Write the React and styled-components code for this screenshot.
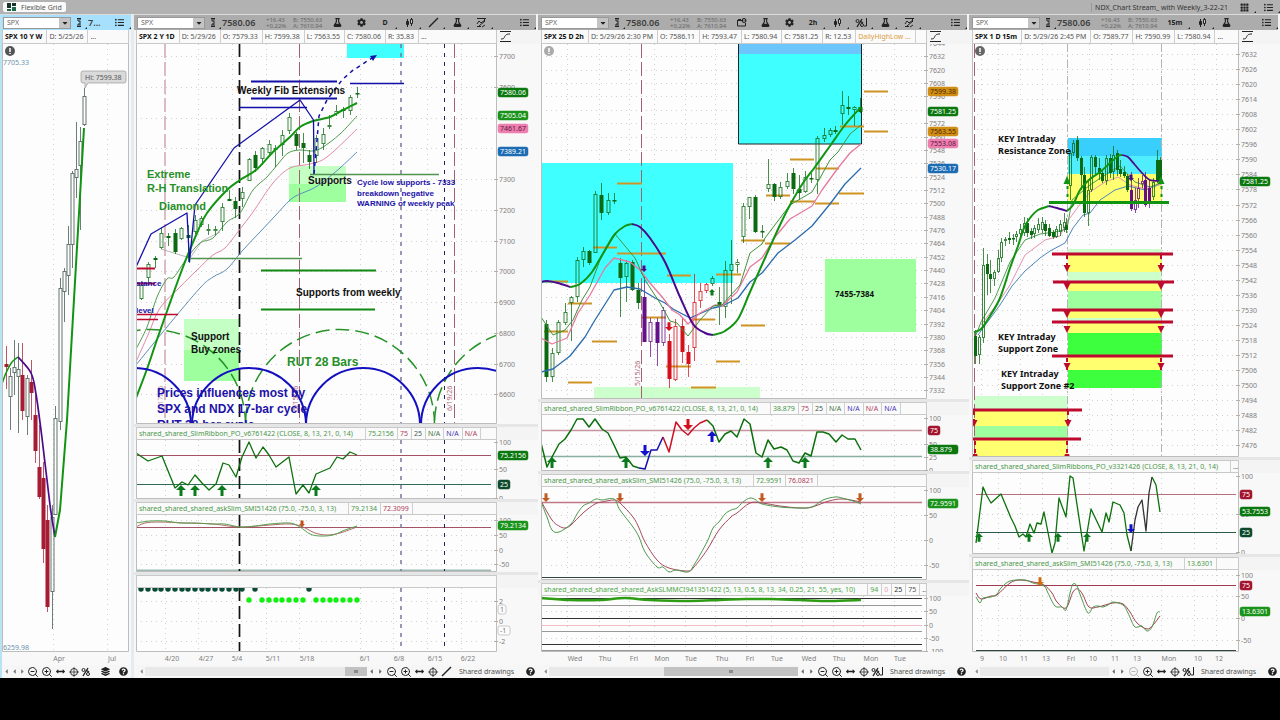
import React from "react";
import styled, { createGlobalStyle, css } from "styled-components";
import {
  FaFlask,
  FaCog,
  FaListUl,
  FaQuestionCircle,
  FaLayerGroup,
  FaCaretDown,
  FaCaretLeft,
  FaCaretRight,
  FaArrowsAltH,
} from "react-icons/fa";
import { BsGrid3X3GapFill } from "react-icons/bs";
import { ZoomIn, ZoomOut } from "lucide-react";

const INK = {
  g: "#0b6a12",
  k: "#3d524a",
  m: "#a51d35",
  p: "#65108a",
  r: "#d5101c",
};

const GREEN = "#119411";
const PURPLE = "#4b0a8c";
const NAVY = "#1210a8";
const CRIMSON = "#bd0a2e";

/* ---------- chart data: [x, high, low, top, bottom, ink, filled] ---------- */

const weeklyCandles = [
  [6, 346, 389, 364, 367, "m", 1], [10, 368, 430, 376, 397, "k"], [14, 340, 395, 367, 373, "k"],
  [18, 343, 433, 369, 377, "k"], [22, 343, 420, 375, 411, "m", 1], [27, 375, 435, 378, 417, "k"],
  [31, 360, 420, 382, 393, "m", 1], [35, 395, 463, 415, 451, "m", 1], [39, 425, 499, 467, 497, "m", 1],
  [43, 462, 563, 478, 549, "m", 1], [47, 505, 612, 520, 607, "m", 1], [52, 505, 629, 517, 592, "k"],
  [55, 406, 515, 418, 515, "k"], [60, 278, 430, 288, 422, "k"], [64, 268, 322, 271, 292, "k"],
  [68, 226, 295, 244, 276, "k"], [72, 171, 268, 173, 245, "k"], [76, 122, 198, 169, 178, "k"],
  [80, 127, 230, 141, 166, "k"], [84, 88, 126, 96, 125, "k"],
];

const dailyCandles = [
  [141, 283, 300, 285, 299, "g"], [148, 262, 285, 264, 278, "g"], [155, 256, 268, 258, 260, "g", 1],
  [161, 228, 249, 233, 248, "g"], [168, 233, 246, 236, 238, "g", 1], [175, 229, 254, 233, 252, "g", 1],
  [181, 227, 240, 228, 239, "g"], [188, 225, 262, 235, 238, "g", 1], [195, 215, 234, 220, 232, "g"],
  [201, 216, 227, 218, 225, "g"], [208, 224, 235, 229, 231, "g"], [215, 226, 235, 229, 231, "g"],
  [222, 203, 231, 207, 222, "g"], [229, 190, 201, 199, 201, "g", 1], [235, 197, 218, 201, 209, "g", 1],
  [242, 187, 207, 192, 199, "g"], [249, 158, 181, 159, 181, "g"], [255, 151, 172, 155, 168, "g", 1],
  [262, 147, 165, 148, 159, "g"], [269, 140, 155, 144, 153, "g"], [275, 145, 167, 148, 150, "g"],
  [282, 130, 156, 135, 145, "g"], [289, 113, 134, 117, 131, "g"], [296, 132, 150, 134, 146, "g", 1],
  [303, 133, 163, 143, 148, "g", 1], [309, 150, 169, 155, 162, "g", 1], [316, 135, 163, 138, 156, "g"],
  [323, 128, 150, 134, 144, "g"], [329, 115, 129, 125, 127, "g"], [336, 105, 116, 111, 114, "g"],
  [343, 107, 118, 109, 111, "g", 1], [350, 95, 115, 97, 111, "g"], [357, 87, 98, 93, 94, "g", 1],
];

const hourlyCandles = [
  [546, 320, 382, 324, 377, "g", 1], [552, 348, 382, 353, 377, "g"], [558, 320, 355, 322, 353, "g"],
  [565, 303, 325, 312, 323, "g"], [571, 296, 341, 297, 303, "g"], [577, 257, 302, 260, 297, "g"],
  [583, 247, 267, 251, 260, "g"], [589, 250, 265, 251, 263, "g", 1], [595, 191, 253, 194, 253, "g"],
  [601, 183, 220, 195, 213, "g", 1], [608, 193, 215, 200, 213, "g"], [614, 193, 204, 200, 201, "g", 1],
  [620, 258, 317, 263, 278, "g", 1], [626, 260, 302, 263, 277, "g"], [632, 260, 291, 262, 290, "g", 1],
  [638, 283, 309, 290, 303, "g", 1], [644, 276, 342, 297, 342, "p", 1], [650, 318, 357, 322, 342, "p"],
  [657, 318, 366, 322, 343, "p", 1], [663, 307, 346, 310, 343, "p"], [669, 334, 388, 341, 379, "r", 1],
  [675, 319, 381, 326, 380, "r"], [682, 318, 363, 326, 352, "r", 1], [688, 345, 377, 352, 364, "r", 1],
  [694, 274, 361, 302, 348, "r"], [700, 283, 308, 291, 301, "r"], [706, 283, 293, 284, 291, "r"],
  [712, 276, 286, 278, 284, "g"], [719, 287, 325, 302, 306, "g", 1], [725, 261, 318, 270, 307, "g"],
  [731, 240, 304, 264, 271, "g"], [737, 259, 273, 262, 265, "g"], [743, 203, 243, 206, 237, "g"],
  [749, 197, 219, 197, 207, "g"], [755, 195, 233, 197, 232, "g", 1], [762, 225, 238, 231, 232, "g", 1],
  [768, 159, 192, 184, 189, "g"], [774, 183, 201, 184, 197, "g", 1], [780, 182, 199, 187, 197, "g"],
  [787, 173, 189, 181, 187, "g"], [793, 168, 194, 173, 189, "g", 1], [799, 175, 200, 189, 193, "g", 1],
  [805, 171, 193, 177, 192, "g"], [811, 173, 183, 178, 179, "g", 1], [817, 136, 194, 138, 180, "g"],
  [824, 128, 142, 135, 139, "g"], [830, 128, 137, 130, 135, "g"], [835, 126, 134, 130, 132, "g", 1],
  [842, 91, 125, 105, 114, "g"], [848, 96, 115, 107, 109, "g", 1], [854, 106, 126, 107, 110, "g"],
  [860, 98, 113, 107, 112, "g", 1],
];

const quarterCandles = [
  [975, 330, 364, 336, 356, "g", 1], [979, 335, 364, 337, 355, "g"], [983, 248, 343, 265, 338, "g"],
  [987, 254, 295, 264, 274, "g", 1], [990, 260, 293, 274, 279, "g", 1], [994, 270, 286, 272, 279, "g"],
  [998, 250, 273, 258, 272, "g"], [1001, 238, 262, 242, 258, "g"], [1005, 237, 246, 239, 241, "g"],
  [1009, 232, 244, 238, 240, "g", 1], [1013, 234, 245, 238, 239, "g", 1], [1016, 231, 242, 234, 237, "g"],
  [1020, 224, 238, 229, 234, "g"], [1024, 217, 236, 223, 233, "g"], [1027, 218, 237, 223, 233, "g", 1],
  [1031, 228, 239, 231, 235, "g", 1], [1034, 225, 238, 228, 234, "g"], [1038, 218, 233, 224, 230, "g"],
  [1042, 217, 233, 222, 230, "g"], [1045, 220, 236, 224, 231, "g", 1], [1049, 224, 237, 228, 236, "g", 1],
  [1053, 230, 239, 232, 237, "g", 1], [1056, 226, 238, 229, 237, "g"], [1060, 220, 236, 224, 232, "g"],
  [1064, 213, 232, 222, 228, "g"], [1066, 218, 233, 225, 230, "g", 1], [1070, 150, 200, 153, 186, "g"],
  [1073, 140, 156, 143, 153, "g"], [1077, 136, 161, 140, 158, "g", 1], [1081, 156, 190, 158, 175, "g", 1],
  [1084, 167, 217, 175, 213, "g", 1], [1088, 180, 226, 190, 213, "g"], [1091, 155, 192, 157, 190, "g"],
  [1095, 155, 175, 157, 167, "g", 1], [1099, 158, 180, 168, 174, "g", 1], [1102, 170, 183, 173, 181, "g", 1],
  [1106, 155, 185, 158, 181, "g"], [1110, 154, 178, 158, 173, "g", 1], [1113, 146, 180, 155, 172, "g"],
  [1117, 150, 176, 153, 170, "g", 1], [1120, 160, 177, 169, 174, "g", 1], [1124, 166, 178, 172, 176, "g", 1],
  [1127, 174, 192, 176, 190, "g", 1], [1131, 172, 211, 190, 209, "p", 1], [1135, 188, 213, 200, 210, "p"],
  [1138, 178, 208, 188, 199, "p"], [1142, 175, 188, 181, 184, "p"], [1145, 172, 207, 180, 205, "p", 1],
  [1149, 180, 208, 188, 204, "p", 1], [1153, 178, 200, 182, 197, "g"], [1157, 150, 183, 160, 180, "g", 1],
  [1160, 157, 184, 160, 182, "g", 1],
];

const ribbonDaily =
  "136,453 148,461 162,456 175,488 182,482 188,485 195,475 202,483 209,490 216,484 223,463 229,465 236,477 242,457 249,442 256,458 263,447 269,455 276,467 289,457 296,494 303,485 309,493 316,474 330,468 337,457 343,459 350,452 357,455";

const upDots = [249, 262, 269, 276, 282, 289, 296, 303, 316, 323, 330, 336, 343, 350, 357];
const topDots = [141, 148, 155, 161, 168, 175, 182, 188, 195, 202, 208, 215, 222, 229, 236, 242, 255, 309];

const dailyBars = [
  [617, 642, 183], [766, 790, 195], [790, 814, 159], [816, 839, 168], [840, 864, 126], [864, 888, 91],
  [864, 888, 131], [839, 864, 193], [815, 839, 203], [790, 815, 201], [545, 568, 281], [593, 617, 247],
  [617, 641, 253], [641, 666, 253], [667, 691, 275], [568, 592, 303], [544, 568, 331], [592, 617, 341],
  [568, 592, 382], [642, 666, 317], [666, 691, 366], [691, 716, 387], [691, 715, 319], [716, 741, 274],
  [716, 740, 361], [741, 765, 325], [741, 765, 240], [765, 790, 243],
];

const zones = [
  [1068, 138, 94, 18, "#38cffd"], [1068, 156, 94, 18, "#50eefc"], [1068, 174, 94, 29, "#ffff70"],
  [1068, 249, 94, 5, "#ccffcc"], [1068, 255, 94, 17, "#ffff70"], [1068, 272, 94, 9, "#ccffcc"],
  [1068, 283, 94, 8, "#ffff70"], [1068, 291, 94, 18, "#9dff9d"], [1068, 311, 94, 7, "#ffff70"],
  [1068, 318, 94, 3, "#ccffcc"], [1068, 323, 94, 10, "#ffff70"], [1068, 333, 94, 22, "#3dff3d"],
  [1068, 357, 94, 13, "#ffff70"], [1068, 370, 94, 18, "#3dff3d"], [974, 396, 94, 14, "#ccffcc"],
  [974, 411, 94, 15, "#ffff70"], [974, 426, 94, 13, "#9dff9d"], [974, 440, 94, 17, "#ffff70"],
];

const zoneLines = [
  [1052, 1173, 254], [1053, 1174, 282], [1052, 1173, 310], [1052, 1173, 322], [1052, 1173, 356],
  [973, 1082, 410], [973, 1081, 439],
];

const scale = (first, step, count, y, dy) =>
  Array.from({ length: count }, (_, i) => [String(first - i * step), y + i * dy]);

/* ---------- drawing pieces ---------- */

const Chart = styled.svg`
  display: block;
  width: 100%;
  height: ${(p) => p.$height}px;
  background: #f8f8f8;
  font-family: "Noto Sans", sans-serif;
  font-size: 7px;
`;

const AxisText = styled.text`
  fill: #808080;
  font-size: 7px;
  text-anchor: ${(p) => p.$anchor || "start"};
`;

const Note = styled.text`
  font-family: ${(p) => (p.$noto ? '"Noto Sans"' : '"Liberation Sans"')}, sans-serif;
  font-size: ${(p) => p.$size || 10}px;
  font-weight: 700;
`;

const tagInk = {
  green: ["#0b780f", "#fff"],
  lime: ["#1a931a", "#fff"],
  dark: ["#0d4a2b", "#fff"],
  red: ["#a3142f", "#fff"],
  pink: ["#ee7db0", "#5b1a3a"],
  blue: ["#1c6cb4", "#fff"],
  gold: ["#d18c14", "#4b2c00"],
  plain: ["#fcfcfc", "#777"],
};

function Tag({ x, y, text, ink }) {
  const [bg, fg] = tagInk[ink];
  const width = text.length > 4 ? 30 : text.length * 4 + 4;
  return (
    <g>
      <rect x={x} y={y - 4} width={width} height={9} rx={2} fill={bg} stroke={ink === "plain" ? "#999" : bg} strokeWidth={0.5} />
      <text x={x + 2} y={y + 3} fill={fg}>
        {text}
      </text>
    </g>
  );
}

function Candles({ data, width = 3 }) {
  return data.map(([x, hi, lo, top, bottom, ink, filled]) => (
    <g key={x} stroke={INK[ink]} fill={filled ? INK[ink] : "none"}>
      <path d={`M${x + 0.5} ${hi}V${top}M${x + 0.5} ${bottom}V${lo}`} opacity={0.75} />
      <rect x={x + 0.5 - width / 2} y={top + 0.5} width={width} height={Math.max(bottom - top - 1, 0.5)} opacity={filled ? 1 : 0.8} />
    </g>
  ));
}

function Line({ pts, color, w = 1, dash }) {
  return <polyline points={pts} fill="none" stroke={color} strokeWidth={w} strokeDasharray={dash} strokeLinejoin="round" />;
}

function HLine({ x1, x2, y, color, w = 1 }) {
  return <path d={`M${x1} ${y + 0.5}H${x2}`} stroke={color} strokeWidth={w} />;
}

function Arrow({ x, y, up, color, size = 5 }) {
  const s = up ? 1 : -1;
  return (
    <path
      d={`M${x} ${y}l${size} ${s * size}h${-size + 1.5}v${s * size * 1.2}h-3v${-s * size * 1.2}h${-size + 1.5}z`}
      fill={color}
    />
  );
}

function Smooth({ pts, color, w = 1, dash }) {
  const p = pts.split(" ").map((s) => s.split(",").map(Number));
  let d = `M${p[0]}`;
  for (let i = 0; i < p.length - 1; i++) {
    const a = p[i - 1] || p[i];
    const b = p[i];
    const c = p[i + 1];
    const e = p[i + 2] || c;
    d += `C${b[0] + (c[0] - a[0]) / 6} ${b[1] + (c[1] - a[1]) / 6} ${c[0] - (e[0] - b[0]) / 6} ${c[1] - (e[1] - b[1]) / 6} ${c}`;
  }
  return <path d={d} fill="none" stroke={color} strokeWidth={w} strokeDasharray={dash} />;
}

function Plot({ frame, y, h, rows = [], labels = [], tags = [], children }) {
  const { x, w, left, right, cols } = frame;
  return (
    <Chart $height={h} viewBox={`${x} ${y} ${w} ${h}`} preserveAspectRatio="xMinYMin meet">
      <rect x={left} y={y} width={right - left} height={h} fill="#fdfdfd" />
      <svg x={left} y={y} width={right - left} height={h} viewBox={`${left} ${y} ${right - left} ${h}`}>
        {cols.map((c) => (
          <path key={c} d={`M${c + 0.5} ${y}v${h}`} stroke="#d2d2d2" strokeDasharray="1 4" />
        ))}
        {rows.map((r) => (
          <path key={r} d={`M${left} ${Math.round(r) + 0.5}H${right}`} stroke="#d2d2d2" strokeDasharray="1 4" />
        ))}
        {children}
      </svg>
      <path d={`M${left + 0.5} ${y}v${h - 0.5}H${right + 0.5}V${y}`} fill="none" stroke="#bdbdbd" />
      {labels.map(([t, ly]) => (
        <g key={t}>
          <path d={`M${right - 2} ${Math.round(ly) + 0.5}h4`} stroke="#b0b0b0" />
          <AxisText x={right + 3} y={Math.round(ly) + 3}>{t}</AxisText>
        </g>
      ))}
      {tags.map(([text, ty, ink]) => (
        <Tag key={text} x={right + 2} y={ty} text={text} ink={ink} />
      ))}
    </Chart>
  );
}

function TimeAxis({ frame, labels }) {
  return (
    <Chart $height={13} viewBox={`${frame.x} 652 ${frame.w} 13`} preserveAspectRatio="xMinYMin meet">
      {labels.map(([t, x]) => (
        <AxisText key={x} x={x} y={661} $anchor="middle">{t}</AxisText>
      ))}
    </Chart>
  );
}

function Alert({ x, color }) {
  return (
    <g>
      <circle cx={x} cy={51} r={5} fill={color} />
      <path d="M0 -3v4M0 2v1" transform={`translate(${x} 51)`} stroke="#fff" strokeWidth={1.5} />
    </g>
  );
}

/* ---------- page chrome ---------- */

const GlobalStyle = createGlobalStyle`
  body {
    margin: 0;
    background: #000;
    font-family: "Noto Sans", sans-serif;
  }
  * {
    box-sizing: border-box;
  }
  button {
    margin: 0;
    padding: 0;
    border: 0;
    background: none;
    color: inherit;
    font: inherit;
  }
`;

const TopBar = styled.header`
  display: flex;
  align-items: center;
  justify-content: space-between;
  height: 14px;
  padding-left: 3px;
  background: #b2b2b2;
  color: #333;
  font-size: 7px;
`;

const GridTab = styled.button`
  display: flex;
  align-items: center;
  gap: 4px;
  height: 10px;
  padding: 0 4px;
  border-radius: 2px;
  background: #fafafa;
  color: #555;
`;

const TopRight = styled.div`
  display: flex;
  align-items: center;
  height: 14px;
`;

const WorkspaceName = styled.span`
  padding: 0 4px 0 3px;
  border-left: 1px solid #999;
`;

const Workspace = styled.main`
  display: grid;
  grid-template-columns: 134fr 404fr 431fr 311fr;
  background: #f4f4f4;
`;

const Panel = styled.section`
  min-width: 0;
  overflow: hidden;
  ${(p) =>
    p.$active &&
    css`
      border-left: 2px solid #b7e3f2;
      border-right: 3px solid #e4ecef;
    `}
`;

const Toolbar = styled.div`
  display: flex;
  align-items: center;
  height: 16px;
  margin-right: ${(p) => (p.$active ? 0 : 2)}px;
  padding-left: ${(p) => (p.$active ? 1 : 3)}px;
  border-top: 1px solid #dcdcdc;
  background: ${(p) => (p.$active ? "#a6e0fd" : "#acacac")};
  color: #222;
`;

const SymbolBox = styled.div`
  display: flex;
  flex: none;
  width: 68px;
  height: 12px;
  border: 1px solid #999;
  background: #fff;
`;

const SymbolInput = styled.input`
  flex: 1;
  min-width: 0;
  padding: 0 3px;
  border: 0;
  outline: 0;
  background: transparent;
  color: #666;
  font: 7px "Noto Sans", sans-serif;
`;

const DropButton = styled.button`
  display: grid;
  place-items: center;
  width: 11px;
  background: #c4c4c4;
  font-size: 8px;
`;

const Price = styled.span`
  flex: none;
  width: ${(p) => p.$width}px;
  padding-left: 1px;
  color: #3c3c3c;
  font-size: 9px;
  font-weight: 600;
`;

const Quote = styled.span`
  flex: none;
  width: ${(p) => p.$width}px;
  padding-left: 4px;
  color: #686868;
  font-size: 6px;
  line-height: 6px;
  white-space: nowrap;
`;

const Tool = styled.button`
  position: relative;
  display: grid;
  flex: none;
  place-items: center;
  width: ${(p) => p.$width || 24}px;
  height: 14px;
  margin-left: ${(p) => (p.$end ? "auto" : 0)};
  color: #222;
  font-size: ${(p) => p.$font || 9}px;
  font-weight: 700;
  &::after {
    content: "";
    position: absolute;
    right: 0;
    bottom: 1px;
    border: 1px solid transparent;
    border-right-color: #222;
    border-bottom-color: #222;
    display: ${(p) => (p.$menu ? "block" : "none")};
  }
`;

const HeadRow = styled.div`
  display: flex;
  margin-right: ${(p) => p.$axis}px;
`;

const HeadLine = styled.div`
  display: flex;
  flex: 1;
  min-width: 0;
  height: ${(p) => (p.$sub ? 13 : 14)}px;
  margin-left: ${(p) => p.$left}px;
  border: 1px solid #c9c9c9;
  border-width: ${(p) => (p.$sub ? "1px" : "0 1px 1px")};
  background: #fafafa;
  overflow: hidden;
`;

const Cell = styled.span`
  flex: none;
  padding: 0 ${(p) => (p.$sub ? 3 : 4)}px 0 2px;
  border-right: ${(p) => (p.$last ? 0 : 1)}px solid #cfcfcf;
  color: ${(p) => p.$color || "#555"};
  font-size: 7px;
  font-weight: ${(p) => (p.$bold ? 700 : 400)};
  line-height: ${(p) => (p.$sub ? 11 : 13)}px;
  white-space: nowrap;
  ${(p) =>
    p.$sub &&
    css`
      &:first-child {
        padding-right: 12px;
      }
    `}
`;

const AxisButton = styled.button`
  display: grid;
  place-items: center;
  width: 16px;
  height: 13px;
  margin-right: -16px;
`;

const Gap = styled.div`
  height: 3px;
  background: #e6e6e6;
`;

const BottomBar = styled.footer`
  display: flex;
  align-items: center;
  height: 13px;
  padding: 0 1px 0 ${(p) => p.$left}px;
  background: #f6f6f6;
  color: #222;
`;

const Scroll = styled.div`
  display: flex;
  flex: 1;
  justify-content: flex-end;
  align-items: center;
  height: 9px;
  background: #e9e9e9;
`;

const Thumb = styled.div`
  display: grid;
  place-items: center;
  width: ${(p) => p.$size}%;
  height: 9px;
  background: #c2c2c2;
  &::after {
    content: "";
    width: 4px;
    height: 3px;
    background: #8a8a8a;
  }
`;

const Mini = styled.button`
  display: grid;
  flex: none;
  place-items: center;
  width: ${(p) => p.$width || 13}px;
  height: 12px;
  opacity: ${(p) => (p.$faded ? 0.3 : 1)};
  color: ${(p) => p.$color || "#222"};
  font-size: ${(p) => p.$font || 9}px;
`;

const Shared = styled.button`
  flex: none;
  width: 71px;
  padding-left: 6px;
  color: #555;
  font-size: 7px;
  text-align: left;
  white-space: nowrap;
`;

const Blank = styled.div`
  flex: ${(p) => (p.$grow ? 1 : "none")};
  width: ${(p) => p.$width || 0}px;
`;

const Glyph = ({ d, w = 11, sw = 1.2 }) => (
  <svg width={w} height={11} viewBox={`0 0 ${w} 11`} fill="none" stroke="#222" strokeWidth={sw}>
    <path d={d} />
  </svg>
);

const LinkIcon = () => <Glyph w={9} sw={1} d="M2 1.5h4M2 9.5h4M3 1.5v2.5h2v3H3v2.5M5 1.5v2M5 7v2" />;
const CandleIcon = () => (
  <svg width={11} height={11} viewBox="0 0 11 11" stroke="#222">
    <path d="M3.5 2v8M7.5 1v8" />
    <path d="M2.5 4.500h2v3h-2z" fill="#222" />
    <path d="M6.500 2.500h2v4h-2z" fill="#ccc" />
  </svg>
);
const SlashIcon = () => <Glyph d="M1 10L10 1" sw={1.5} />;
const PatternIcon = () => <Glyph sw={1} d="M1 1.5h9M1 9.5h4M1 7l2-3 2 2 4-3M3 9l6-5M6 10l3-2M8.500 2v3" />;
const NewsIcon = () => (
  <svg width={11} height={11} viewBox="0 0 11 11" fill="none" stroke="#222">
    <path d="M1 3.5h6M1.500 3v6h8V6M2 2.500h3" />
    <circle cx="8" cy="3.5" r="2" fill="#222" />
    <path d="M8 2v3" stroke="#ddd" />
  </svg>
);
const PercentIcon = ({ bar = true }) => (
  <svg width={13} height={11} viewBox="0 0 13 11" fill="none" stroke="#222">
    <circle cx="2.5" cy="4" r="1.5" />
    <circle cx="7" cy="8" r="1.5" />
    <path d="M2 10L7 2M5 4l3 2" strokeWidth="1.4" />
    {bar && <path d="M11.5 1v8H9" />}
  </svg>
);
const TargetIcon = () => (
  <svg width={10} height={10} viewBox="0 0 10 10" fill="none" stroke="#333">
    <circle cx="5" cy="5" r="3.5" />
    <path d="M5 0v10M0 5h10" strokeWidth="0.8" />
  </svg>
);
const AxisIcon = () => (
  <svg width={11} height={11} viewBox="0 0 11 11" fill="none" stroke="#222">
    <path d="M0 0.500h11M0 10.500h11" />
    <path d="M1 8c4 0 3-2 4-3s1-2 5-2" />
  </svg>
);
const LogoIcon = () => (
  <svg width={10} height={9} viewBox="0 0 10 9">
    <path d="M0 0h4v5H0zM5 0h4v3H5z" fill="#17332b" />
    <path d="M5 4h4v4H5zM0 6h4v2H0z" fill="#1d6a4c" />
  </svg>
);

const tools = {
  news: [<NewsIcon />, "News"],
  flask: [<FaFlask />, "Studies"],
  gear: [<FaCog />, "Settings"],
  candle: [<CandleIcon />, "Chart type"],
  slash: [<SlashIcon />, "Drawings"],
  percent: [<PercentIcon />, "Fibonacci"],
  study: [<FaFlask />, "Edit studies"],
  pattern: [<PatternIcon />, "Patterns"],
};

function PanelToolbar({ active, items = [], period }) {
  return (
    <Toolbar $active={active}>
      <SymbolBox>
        <SymbolInput defaultValue="SPX" aria-label="Symbol" />
        <DropButton aria-label="Open symbols">
          <FaCaretDown />
        </DropButton>
      </SymbolBox>
      <Tool $width={16} $menu aria-label="Link">
        <LinkIcon />
      </Tool>
      {active ? (
        <Price $width={20}>7...</Price>
      ) : (
        <>
          <Price $width={41}>7580.06</Price>
          <Quote $width={27}>
            +16.43
            <br />
            +0.22%
          </Quote>
          <Quote $width={36}>
            B: 7550.63
            <br />
            A: 7610.94
          </Quote>
        </>
      )}
      {items.map((name) =>
        name === "period" ? (
          <Tool key={name} $font={7} $width={period.length > 2 ? 30 : 24} $menu>
            {period}
          </Tool>
        ) : (
          <Tool key={name} aria-label={tools[name][1]} $menu={!["news", "flask", "gear"].includes(name)}>
            {tools[name][0]}
          </Tool>
        )
      )}
      <Tool $end $menu aria-label="Panel menu">
        <FaListUl />
      </Tool>
    </Toolbar>
  );
}

function Heading({ cells, sub, axis = 41, left = 2 }) {
  return (
    <HeadRow $axis={axis}>
      <HeadLine $sub={sub} $left={left}>
        {cells.map(([text, color, bold], i) => (
          <Cell key={i} $sub={sub} $color={color} $bold={bold} $last={text === "..."}>
            {text}
          </Cell>
        ))}
      </HeadLine>
      {!sub && axis > 10 && (
        <AxisButton aria-label="Price axis">
          <AxisIcon />
        </AxisButton>
      )}
    </HeadRow>
  );
}

function SubPane({ title, axis, left, ...plot }) {
  return (
    <>
      <Gap />
      <Heading sub cells={title} axis={axis} left={left} />
      <Plot {...plot} />
    </>
  );
}

function ViewTools({ faded, last }) {
  return (
    <>
      <Mini aria-label="Zoom out" $width={14} $faded={faded}>
        <ZoomOut size={12} />
      </Mini>
      <Mini aria-label="Zoom in" $width={14}>
        <ZoomIn size={12} />
      </Mini>
      <Mini aria-label="Fit">
        <FaArrowsAltH />
      </Mini>
      <Mini aria-label="Crosshair" $width={14}>
        <TargetIcon />
      </Mini>
      <Mini aria-label="Active tool">{last}</Mini>
    </>
  );
}

function Footer({ thumb, last, faded }) {
  return (
    <BottomBar $left={3}>
      <Mini $width={8} $font={7} $color="#888" aria-label="Scroll to start">
        <FaCaretLeft />
      </Mini>
      <Scroll>{thumb && <Thumb $size={thumb} />}</Scroll>
      <Mini $width={9} $font={7} $color="#666" aria-label="Scroll left">
        <FaCaretLeft />
      </Mini>
      <Mini $width={9} $font={7} $color="#666" aria-label="Scroll right">
        <FaCaretRight />
      </Mini>
      <ViewTools last={last} faded={faded} />
      <Shared>Shared drawings</Shared>
      <Mini aria-label="Help">
        <FaQuestionCircle />
      </Mini>
    </BottomBar>
  );
}

/* ---------- the four panels ---------- */

const weekly = { x: 2, w: 129, left: 2, right: 128, cols: [53, 107] };
const daily = { x: 134, w: 404, left: 136, right: 496, cols: [165, 198, 232, 266, 299, 360, 393, 427, 461] };
const hourly = {
  x: 538, w: 431, left: 541, right: 926,
  cols: [567, 599, 629, 654, 685, 715, 746, 771, 802, 833, 863, 894],
};
const quarter = {
  x: 969, w: 311, left: 972, right: 1238,
  cols: [981, 998, 1020, 1042, 1067, 1089, 1111, 1133, 1161, 1194, 1216],
};

const G = "#4b984b";
const R = "#b0405a";
const B = "#4436b8";

function WeeklyPanel() {
  return (
    <Panel $active>
      <PanelToolbar active />
      <Heading axis={2} left={0} cells={[["SPX 10 Y W", "#111", 1], ["D: 5/25/26"], ["..."]]} />
      <Plot frame={weekly} y={44} h={608}>
        <Alert x={10} color="#555" />
        <text x={3} y={65} fill="#6b93b0">7705.33</text>
        <text x={3} y={650} fill="#6b93b0">6259.98</text>
        <Candles data={weeklyCandles} />
        <Smooth pts="2,384 6,373 12,362 18,357" color={GREEN} w={1.5} />
        <Smooth pts="18,357 31,373 36,394 42,438 50,505 55,537" color={PURPLE} w={1.7} />
        <Line pts="55,537 60,510 67,420 78,230 84,128" color={GREEN} w={2} />
        <path d="M83 71h41a2 2 0 0 1 2 2v8a2 2 0 0 1-2 2H88l-3 5v-5h-2a2 2 0 0 1-2-2v-8a2 2 0 0 1 2-2z" fill="#dadada" stroke="#999" strokeWidth={0.7} />
        <text x={85} y={80} fill="#555">Hi: 7599.38</text>
      </Plot>
      <TimeAxis frame={weekly} labels={[["Apr", 59], ["Jul", 112]]} />
      <BottomBar $left={0}>
        {[0, 1, 2].map((i) => (
          <Mini key={i} $width={8} $font={7} $color="#777" aria-label={`Scroll ${i}`}>
            {i < 2 ? <FaCaretLeft /> : <FaCaretRight />}
          </Mini>
        ))}
        <ViewTools last={<PercentIcon bar={false} />} />
        <Blank $grow />
        <Mini aria-label="Layers" $width={14}>
          <FaLayerGroup />
        </Mini>
        <Blank $width={5} />
        <Mini aria-label="Help">
          <FaQuestionCircle />
        </Mini>
      </BottomBar>
    </Panel>
  );
}

function DailyVerticals({ y, h }) {
  return (
    <g fill="none">
      <path d={`M239.5 ${y}v${h}`} stroke="#111" strokeWidth={1.7} strokeDasharray="13 5" />
      <path d={`M401 ${y}v${h}`} stroke="#77779c" strokeWidth={1.5} strokeDasharray="4 5" />
      <path d={`M444.5 ${y}v${h}`} stroke="#24245a" strokeDasharray="4 5" />
    </g>
  );
}

function DailyPanel() {
  const price = scale(7700, 100, 12, 56, 30.77);
  return (
    <Panel>
      <PanelToolbar items={["flask", "gear", "period", "candle", "slash", "study", "pattern"]} period="D" />
      <Heading
        cells={[
          ["SPX 2 Y 1D", "#111", 1], ["D: 5/29/26"], ["O: 7579.33"], ["H: 7599.38"], ["L: 7563.55"],
          ["C: 7580.06"], ["R: 35.83"], ["..."],
        ]}
      />
      <Plot
        frame={daily}
        y={44}
        h={380}
        rows={price.map((p) => p[1])}
        labels={price.filter((p) => !["7500", "7400"].includes(p[0]))}
        tags={[["7580.06", 92, "green"], ["7505.04", 115, "lime"], ["7461.67", 128, "pink"], ["7389.21", 151, "blue"]]}
      >
        <rect x={347} y={44} width={57} height={14} fill="#40ffff" />
        <path d="M289 166h57v18h-57zM184 319h55v31h-55z" fill="#c4ffc4" />
        <path d="M289 184h57v18h-57zM184 350h55v31h-55z" fill="#9dff9d" />
        <path d="M165 44v380" stroke="#dcbcc2" strokeWidth={2} strokeDasharray="14 4" />
        <path d="M299.5 44v380M454.5 44v380" stroke="#a5606f" strokeDasharray="14 4" />
        <DailyVerticals y={44} h={380} />
        <Smooth pts="136,365 167,327 200,288 213,277 227,269 243,250 260,232 275,216 290,200 300,194 312,189 323,182 340,168 357,152" color="#5b8fb8" />
        <Smooth pts="136,362 148,335 160,308 180,287 197,270 213,255 225,248 240,229 253,212 273,183 290,168 310,164 327,157 357,129" color="#e08aa8" />
        <Smooth pts="136,349 147,327 157,297 167,279 174,277 187,258 200,243 213,238 227,222 240,213 253,190 267,177 278,164 288,153 300,150 313,151 323,147 340,134 357,116" color="#4f9c4f" />
        <Line pts="161,249 190,258 202,241 220,232" color="#999" w={0.7} />
        <Candles data={dailyCandles} />
        <Smooth pts="136,398 147,369 160,331 183,267 197,233 207,213 227,190 240,180 256,170 273,152 290,137 300,127 313,121 330,117 343,110 357,103" color={GREEN} w={2} />
        <Line pts="136,267 151,234 187,213 189.5,262 195,205 234,148 300,100 313.5,120 314,174" color={NAVY} w={1.3} />
        <HLine x1={251} x2={337} y={81} color={NAVY} w={2} />
        <HLine x1={251} x2={337} y={98} color={NAVY} w={2} />
        <HLine x1={239} x2={307} y={107} color={NAVY} w={1.5} />
        <HLine x1={350} x2={404} y={83} color={NAVY} w={1.5} />
        <Line pts="314,174 317,140 319,116 327,100 342,80 352,71 372,58" color={NAVY} w={1.5} dash="4 4" />
        <path d="M377 55l-7 1 3 5z" fill={NAVY} />
        <HLine x1={310} x2={439} y={174} color="#4f954f" w={1.5} />
        <HLine x1={190} x2={302} y={258} color="#4f954f" w={1.5} />
        <HLine x1={261} x2={376} y={270} color="#118811" w={2} />
        <HLine x1={261} x2={375} y={309} color="#118811" w={2} />
        <HLine x1={136} x2={155} y={268} color={CRIMSON} w={2} />
        <HLine x1={136} x2={155} y={283} color={CRIMSON} w={2} />
        <HLine x1={136} x2={178} y={314} color={CRIMSON} w={1.5} />
        <HLine x1={136} x2={158} y={319} color={CRIMSON} w={1.5} />
        <g fill="none" stroke="#259225" strokeWidth={1.5} strokeDasharray="14 6">
          {[151, 340, 529].map((cx) => (
            <circle key={cx} cx={cx} cy={424} r={94.5} />
          ))}
        </g>
        <g fill="none" stroke="#1410c0" strokeWidth={2}>
          {[134, 249, 363, 478].map((cx) => (
            <circle key={cx} cx={cx} cy={425} r={57} />
          ))}
        </g>
        <text transform="translate(163 411) rotate(-90)" fill="#c49aa8">4/17/26</text>
        <text transform="translate(298 411) rotate(-90)" fill="#b06a80">5/15/26</text>
        <text transform="translate(452 411) rotate(-90)" fill="#b06a80">6/19/26</text>
        <Note x={237} y={94} fill="#111">Weekly Fib Extensions</Note>
        <g fill="#279027">
          <Note x={147} y={178} $size={11}>Extreme</Note>
          <Note x={147} y={192} $size={11}>R-H Translation</Note>
          <Note x={159} y={210} $size={11}>Diamond</Note>
          <Note x={287} y={366} $size={12}>RUT 28 Bars</Note>
        </g>
        <Note x={308} y={184} fill="#111">Supports</Note>
        <Note x={296} y={296} fill="#111">Supports from weekly</Note>
        <Note x={191} y={340} fill="#111">Support</Note>
        <Note x={191} y={353} fill="#111">Buy zones</Note>
        <g fill="#1c12a8">
          <Note x={357} y={185} $size={8}>Cycle low supports - 7333</Note>
          <Note x={357} y={196} $size={8}>breakdown negative</Note>
          <Note x={357} y={206} $size={8}>WARNING of weekly peak</Note>
          <Note x={136} y={286} $size={8}>stance</Note>
          <Note x={136} y={313} $size={8}>level</Note>
          <Note x={157} y={397} $size={12}>Prices influences most by</Note>
          <Note x={157} y={413} $size={12}>SPX and NDX 17-bar cycle</Note>
          <Note x={157} y={429} $size={12}>RUT 28-bar cycle</Note>
        </g>
      </Plot>
      <SubPane
        title={[
          ["shared_shared_SlimRibbon_PO_v6761422 (CLOSE, 8, 13, 21, 0, 14)", G], ["75.2156", G], ["75", R],
          ["25", "#3d5a50"], ["N/A", "#457545"], ["N/A", B], ["N/A", R],
        ]}
        frame={daily}
        y={440}
        h={59}
        rows={[469]}
        labels={[["100", 442], ["50", 469], ["0", 498]]}
        tags={[["75.2156", 455, "green"], ["25", 484, "dark"]]}
      >
        <HLine x1={136} x2={491} y={455} color="#a35366" />
        <HLine x1={136} x2={491} y={484} color="#2f6a5a" />
        <DailyVerticals y={440} h={59} />
        <Line pts={ribbonDaily} color="#0c700c" w={1.3} />
        {[181, 195, 222, 316].map((x) => (
          <Arrow key={x} x={x} y={485} up color="#0a7a1a" />
        ))}
      </SubPane>
      <SubPane
        title={[["shared_shared_shared_askSlim_SMI51426 (75.0, -75.0, 3, 13)", G], ["79.2134", G], ["72.3099", R]]}
        frame={daily}
        y={515}
        h={57}
        rows={[520, 535, 550, 564]}
        labels={[["100", 520], ["50", 535], ["0", 550], ["-50", 564]]}
        tags={[["79.2134", 525, "lime"]]}
      >
        <HLine x1={136} x2={491} y={527} color="#a35366" />
        <HLine x1={136} x2={491} y={570} color="#9dbab4" w={2} />
        <DailyVerticals y={515} h={57} />
        <Smooth pts="136,527 145,523 160,522 185,523 213,524 240,527 270,525 290,524 303,527 315,533 327,535 340,533 357,527" color="#b06a68" />
        <Smooth pts="136,523 150,521 165,521 180,523 195,523 213,524 225,524 240,527 255,526 270,524 290,523 300,527 310,534 320,536 333,535 345,530 357,526" color="#5aa050" />
        <Arrow x={302} y={527} color="#c05018" size={3} />
      </SubPane>
      <SubPane
        title={[]}
        frame={daily}
        y={588}
        h={64}
        rows={[601, 621, 641]}
        labels={[["2", 601], ["0", 621], ["-2", 641]]}
        tags={[["1", 609, "plain"], ["-1", 630, "plain"]]}
      >
        <DailyVerticals y={588} h={64} />
        {topDots.map((x) => (
          <circle key={x} cx={x} cy={589} r={2.7} fill="#0c4a38" />
        ))}
        {upDots.map((x) => (
          <circle key={x} cx={x} cy={600} r={2.7} fill="#12f012" />
        ))}
      </SubPane>
      <TimeAxis
        frame={daily}
        labels={[
          ["4/20", 172], ["4/27", 206], ["5/4", 237], ["5/11", 273], ["5/18", 307], ["6/1", 365], ["6/8", 399],
          ["6/15", 435], ["6/22", 468],
        ]}
      />
      <Footer thumb={10} last={<SlashIcon />} />
    </Panel>
  );
}

function HourlyPanel() {
  const price = scale(7644, 12, 27, 43, 13.36);
  return (
    <Panel>
      <PanelToolbar items={["news", "flask", "gear", "period", "candle", "percent", "study", "pattern"]} period="2h" />
      <Heading
        axis={42}
        left={3}
        cells={[
          ["SPX 25 D 2h", "#111", 1], ["D: 5/29/26 2:30 PM"], ["O: 7586.11"], ["H: 7593.47"], ["L: 7580.94"],
          ["C: 7581.25"], ["R: 12.53"], ["DailyHighLow ...", "#dc9a3c"],
        ]}
      />
      <Plot
        frame={hourly}
        y={44}
        h={355}
        rows={price.map((p) => p[1])}
        labels={price.filter((p) => p[0] !== "7584")}
        tags={[
          ["7599.38", 91, "gold"], ["7581.25", 111, "green"], ["7563.55", 131, "gold"], ["7553.08", 143, "pink"],
          ["7530.17", 168, "blue"],
        ]}
      >
        <rect x={541} y={163} width={192} height={120} fill="#40ffff" />
        <rect x={738} y={44} width={123} height={100} fill="#40ffff" />
        <rect x={738} y={44} width={123} height={10} fill="#6cc6fb" />
        <path d="M738.5 44v100h123V44" fill="none" stroke="#222" />
        <rect x={594} y={387} width={166} height={12} fill="#ccffcc" />
        <rect x={825} y={259} width={91} height={73} fill="#9dff9d" />
        <path d="M641.5 44v355" stroke="#a5606f" strokeDasharray="14 4" />
        <Alert x={549} color="#aaa" />
        <text transform="translate(640 386) rotate(-90)" fill="#b06a80">5/15/26</text>
        {dailyBars.map(([a, b, y]) => (
          <HLine key={`${a}-${y}`} x1={a} x2={b} y={y} color="#cf9424" w={2} />
        ))}
        <Candles data={hourlyCandles} />
        <Line pts="541,372 553,369 570,356 585,337 595,320 614,290 627,287 640,289 655,298 665,303 673,309 690,318 713,308 722,306 738,298 750,282 762,273 778,253 795,240 812,226 830,204 845,184 861,168" color="#2a6cae" w={1.3} />
        <Line pts="541,338 552,344 567,338 578,313 590,295 605,268 614,258 630,262 640,270 650,283 663,298 672,310 680,315 688,324 700,313 715,305 722,306 737,292 750,267 762,258 775,237 790,219 812,206 822,190 838,168 850,153 861,144" color="#e6799f" w={1.3} />
        <Line pts="541,317 553,335 565,330 573,320 582,300 590,287 600,260 615,234 625,246 635,258 645,280 660,303 670,321 677,323 688,336 700,320 713,306 722,305 730,296 740,285 750,253 762,244 765,238 790,205 812,192 820,178 830,160 838,152 850,134 861,125" color="#42923c" />
        <Smooth pts="541,282 547,281 558,283 570,287" color={PURPLE} w={2} />
        <Smooth pts="570,287 580,284 592,272 605,250 615,234 625,226 632,224" color={GREEN} w={2} />
        <Smooth pts="632,224 640,227 650,238 665,262 680,297 693,324 705,333 713,335" color={PURPLE} w={2} />
        <Smooth pts="713,335 725,331 738,319 750,292 765,258 780,225 790,205 803,183 815,167 830,146 845,125 861,107" color={GREEN} w={2} />
        <Arrow x={644} y={272} color={PURPLE} size={3} />
        <Arrow x={669} y={331} color="#d5101c" size={4} />
        <Arrow x={712} y={289} up color="#0a7a1a" size={3} />
        <Note x={835} y={297} $noto $size={8} fill="#111">7455-7384</Note>
      </Plot>
      <SubPane
        axis={42}
        left={3}
        title={[
          ["shared_shared_SlimRibbon_PO_v6761422 (CLOSE, 8, 13, 21, 0, 14)", G], ["38.879", G], ["75", R],
          ["25", "#3d5a50"], ["N/A", "#457545"], ["N/A", B], ["N/A", R], ["N/A", B],
        ]}
        frame={hourly}
        y={415}
        h={56}
        rows={[444]}
        labels={[["100", 418], ["50", 444], ["25", 457], ["0", 470]]}
        tags={[["75", 430, "red"], ["38.879", 449, "green"]]}
      >
        <HLine x1={541} x2={922} y={430} color="#c596a2" w={1.5} />
        <HLine x1={541} x2={922} y={456} color="#8aae9f" w={1.5} />
        <Line pts="541,443 547,467 552,457 559,444 565,439 571,430 577,419 583,419 589,427 595,419 602,429 608,433 614,445 620,458 626,457 633,466 639,468" color="#0c700c" w={1.5} />
        <Line pts="639,468 645,469 651,450 657,450 663,437" color="#1410b0" w={1.5} />
        <Line pts="663,437 669,452 676,422 682,430 688,435 694,428 700,423 707,420" color="#d01024" w={1.5} />
        <Line pts="707,420 713,426 719,442 725,434 731,431 737,437 744,419 750,424 756,453 762,457 768,440 774,449 781,447 787,450 793,461 799,463 805,453 811,456 817,432 823,432 829,434 836,442 842,435 848,439 855,439 861,450" color="#0c700c" w={1.5} />
        {[552, 626, 768, 805].map((x) => (
          <Arrow key={x} x={x} y={457} up color="#0a7a1a" />
        ))}
        <Arrow x={645} y={456} color="#1210c8" />
        <Arrow x={688} y={430} color="#d5101c" />
        <Arrow x={712} y={431} up color="#1210c8" />
      </SubPane>
      <SubPane
        axis={42}
        left={3}
        title={[["shared_shared_shared_askSlim_SMI51426 (75.0, -75.0, 3, 13)", G], ["72.9591", G], ["76.0821", R]]}
        frame={hourly}
        y={487}
        h={93}
        rows={[515, 540, 565]}
        labels={[["100", 490], ["50", 515], ["0", 540], ["-50", 565]]}
        tags={[["72.9591", 503, "lime"]]}
      >
        <HLine x1={541} x2={922} y={502} color="#c07888" w={1.5} />
        <HLine x1={541} x2={922} y={577} color="#33453f" />
        <Smooth pts="541,501 552,520 559,526 565,528 571,525 583,513 595,504 602,502 614,500 620,503 633,517 639,528 645,542 657,560 669,568 688,571 694,567 707,550 719,530 731,517 737,513 750,503 762,503 780,506 800,508 812,507 829,501 843,499 861,502" color="#a5485c" />
        <Smooth pts="541,502 547,517 552,530 559,532 571,524 577,514 583,506 589,503 596,499 602,500 614,499 620,510 633,527 639,537 645,552 657,567 663,567 669,572 676,570 688,572 694,565 707,542 713,528 719,522 725,514 731,510 737,508 743,502 750,498 756,500 762,504 780,507 800,508 812,507 823,500 835,497 842,498 853,501 861,504" color="#4b984b" />
        {[546, 620, 762, 860].map((x) => (
          <Arrow key={x} x={x} y={502} color="#c05a20" size={4} />
        ))}
      </SubPane>
      <SubPane
        axis={42}
        left={3}
        title={[
          ["shared_shared_shared_shared_AskSLMMCI941351422 (5, 13, 0.5, 8, 13, 34, 0.25, 21, 55, yes, 10)", "#4fa84a"],
          ["94", "#4fa84a"], ["0", "#eaa0ae"], ["25", "#333"], ["75", "#555"], ["..."],
        ]}
        frame={hourly}
        y={596}
        h={56}
        rows={[611, 638]}
        labels={[["100", 598], ["50", 611], ["0", 625], ["-50", 638], ["-100", 651]]}
      >
        {[[598, "#333"], [605, "#999"], [618, "#333"], [625, "#f0bcc8"], [631, "#999"], [644, "#333"], [650, "#999"]].map(
          ([y, c]) => (
            <HLine key={y} x1={541} x2={922} y={y} color={c} />
          )
        )}
        <Smooth pts="541,598 570,600 600,600 625,598 650,600 690,601 720,600 745,599 770,599 800,600 830,601 861,600" color="#2e9c14" w={2.5} />
      </SubPane>
      <TimeAxis
        frame={hourly}
        labels={[
          ["Wed", 575], ["Thu", 605], ["Fri", 634], ["Mon", 662], ["Tue", 691], ["Thu", 722], ["Fri", 750],
          ["Tue", 777], ["Wed", 809], ["Thu", 839], ["Mon", 871], ["Tue", 900],
        ]}
      />
      <Footer thumb={54} last={<PercentIcon />} />
    </Panel>
  );
}

function QuarterPanel() {
  const price = scale(7632, 6, 27, 54, 15.05);
  const downs = [
    [1067, 272], [1161, 272], [1067, 290], [1161, 290], [1067, 318], [1161, 318], [1067, 333], [1161, 333],
    [1067, 370], [1161, 370], [974, 427], [1068, 427],
  ];
  const stems = [
    [1067, 255], [1161, 255], [1067, 358], [1161, 358], [974, 411], [1068, 411], [975, 441], [1067, 441],
  ];
  return (
    <Panel>
      <PanelToolbar items={["period", "candle", "flask"]} period="15m" />
      <Heading
        left={3}
        cells={[
          ["SPX 1 D 15m", "#111", 1], ["D: 5/29/26 2:45 PM"], ["O: 7589.77"], ["H: 7590.99"], ["L: 7580.94"], ["..."],
        ]}
      />
      <Plot
        frame={quarter}
        y={44}
        h={413}
        rows={price.map((p) => p[1])}
        labels={price}
        tags={[["7581.25", 181, "green"]]}
      >
        {zones.map(([x, y, w, h, c]) => (
          <rect key={`${x}-${y}`} x={x} y={y} width={w} height={h} fill={c} />
        ))}
        <path d="M974.5 44v413" stroke="#a5606f" strokeDasharray="14 4" />
        <path d="M1067.5 44v413M1161.5 44v413" stroke="#b5b5b5" strokeDasharray="8 3 2 3" />
        <Alert x={980} color="#666" />
        <Line pts="978,335 1000,305 1012,286 1025,271 1040,258 1050,251 1065,243 1073,228 1083,215 1090,213 1100,200 1115,190 1128,186 1145,190 1161,184" color="#4a86bd" />
        <Line pts="981,325 1000,300 1010,285 1025,255 1045,240 1060,236 1067,222 1078,207 1090,192 1105,182 1118,177 1130,185 1145,189 1161,184" color="#e393ac" />
        <Line pts="974,340 981,322 995,298 1010,262 1025,240 1040,234 1055,232 1067,229 1072,200 1090,185 1105,175 1120,166 1135,182 1150,187 1161,183" color="#4f9c4f" />
        <Candles data={quarterCandles} width={2} />
        <Smooth pts="974,332 981,329 990,316 1000,298 1010,268 1018,246 1024,228 1030,218 1038,210 1049,206" color={GREEN} w={2} />
        <Smooth pts="1049,206 1057,208 1067,211" color={PURPLE} w={2} />
        <Smooth pts="1067,211 1073,205 1080,190 1090,179 1100,172 1110,163 1118,156 1122,155" color={GREEN} w={2} />
        <Smooth pts="1122,155 1128,157 1135,165 1143,174 1150,180 1161,181" color={PURPLE} w={1.7} />
        <HLine x1={1049} x2={1169} y={202} color={GREEN} w={3} />
        <path d="M1067.5 186v16M1161.5 186v16" stroke={GREEN} strokeWidth={2} strokeDasharray="3 5" />
        <path d="M1067 176l3.5 8h-7zM1161 176l3.5 8h-7z" fill={GREEN} />
        <Arrow x={1131} y={181} color={PURPLE} size={3} />
        {zoneLines.map(([a, b, y]) => (
          <HLine key={y} x1={a} x2={b} y={y - 0.5} color={CRIMSON} w={3} />
        ))}
        {downs.map(([x, y]) => (
          <path key={`${x}-${y}`} d={`M${x} ${y}l-3.5 -7h7z`} fill={CRIMSON} />
        ))}
        {stems.map(([x, y]) => (
          <path key={`${x}-${y}`} d={`M${x} ${y}v12`} stroke={CRIMSON} strokeWidth={2} strokeDasharray="4 4" />
        ))}
        <path d="M972 457l1-3h4l1 3zM1064 457l1-3h4l1 3z" fill={CRIMSON} />
        <g fill="#111">
          <Note $noto $size={9} x={998} y={142}>KEY Intraday</Note>
          <Note $noto $size={9} x={998} y={154}>Resistance Zone</Note>
          <Note $noto $size={9} x={998} y={340}>KEY Intraday</Note>
          <Note $noto $size={9} x={998} y={352}>Support Zone</Note>
          <Note $noto $size={9} x={1001} y={377}>KEY Intraday</Note>
          <Note $noto $size={9} x={1001} y={389}>Support Zone #2</Note>
        </g>
      </Plot>
      <SubPane
        left={3}
        title={[["shared_shared_shared_SlimRibbons_PO_v3321426 (CLOSE, 8, 13, 21, 0, 14)", G], ["..."]]}
        frame={quarter}
        y={473}
        h={81}
        rows={[514]}
        labels={[["100", 476], ["50", 514], ["0", 552]]}
        tags={[["75", 494, "red"], ["53.7553", 511, "green"], ["25", 532, "dark"]]}
      >
        <HLine x1={976} x2={1236} y={494} color="#b57080" />
        <HLine x1={976} x2={1236} y={532} color="#2b5a48" />
        <Line pts="976,543 983,487 987,496 991,503 1001,494 1011,518 1015,526 1019,537 1023,534 1026,537 1030,524 1034,533 1037,523 1041,524 1044,512 1052,553 1055,543 1059,498 1066,517 1070,476 1073,478 1084,551 1088,527 1091,509 1102,532 1106,513 1109,522 1113,502 1120,505 1124,513 1127,535 1131,551" color="#0c700c" w={1.3} />
        <Line pts="1131,551 1135,520 1138,507 1142,500 1146,531 1149,493 1152,477" color="#333" w={1.3} />
        <Line pts="1152,477 1156,485 1160,512" color="#0c700c" w={1.3} />
        {[979, 1029, 1058, 1087].map((x) => (
          <Arrow key={x} x={x} y={533} up color="#0a7a1a" size={4} />
        ))}
        <Arrow x={1131} y={533} color="#1210c8" size={4} />
      </SubPane>
      <SubPane
        left={3}
        title={[["shared_shared_shared_askSlim_SMI51426 (75.0, -75.0, 3, 13)", G], ["13.6301", G]]}
        frame={quarter}
        y={570}
        h={82}
        rows={[575, 596, 618, 640]}
        labels={[["100", 575], ["50", 596], ["0", 618], ["-50", 640]]}
        tags={[["75", 585, "red"], ["13.6301", 611, "lime"]]}
      >
        <HLine x1={976} x2={1236} y={585} color="#a03c50" />
        <HLine x1={976} x2={1236} y={650} color="#33453f" />
        <Smooth pts="976,593 981,599 991,596 997,595 1010,583 1020,580 1033,582 1044,585 1052,593 1057,602 1066,608 1073,592 1078,589 1083,595 1089,607 1098,607 1113,603 1123,604 1130,612 1137,623 1147,629 1153,625 1160,616" color="#a03c50" />
        <Smooth pts="976,597 980,603 983,598 991,597 997,594 1001,588 1010,581 1025,580 1033,583 1044,586 1048,593 1055,606 1062,607 1066,610 1070,593 1073,584 1077,586 1081,597 1088,613 1093,607 1098,606 1103,607 1108,605 1113,602 1123,605 1128,613 1134,626 1138,627 1142,626 1147,631 1152,627 1157,613 1160,612" color="#4b984b" />
        <Arrow x={1040} y={586} color="#d06a10" size={4} />
      </SubPane>
      <TimeAxis
        frame={quarter}
        labels={[
          ["9", 982], ["10", 1003], ["11", 1024], ["13", 1046], ["Fri", 1071], ["10", 1093], ["11", 1115],
          ["13", 1137], ["Mon", 1169], ["10", 1198], ["12", 1219],
        ]}
      />
      <Footer faded last={<PercentIcon />} />
    </Panel>
  );
}

export default function App() {
  return (
    <>
      <GlobalStyle />
      <TopBar>
        <GridTab>
          <LogoIcon />
          Flexible Grid
        </GridTab>
        <TopRight>
          <WorkspaceName>NDX_Chart Stream_ with Weekly_3-22-21</WorkspaceName>
          <Tool aria-label="Layout grid" $menu>
            <BsGrid3X3GapFill />
          </Tool>
          <Tool aria-label="Workspace menu" $menu>
            <FaListUl />
          </Tool>
        </TopRight>
      </TopBar>
      <Workspace>
        <WeeklyPanel />
        <DailyPanel />
        <HourlyPanel />
        <QuarterPanel />
      </Workspace>
    </>
  );
}
